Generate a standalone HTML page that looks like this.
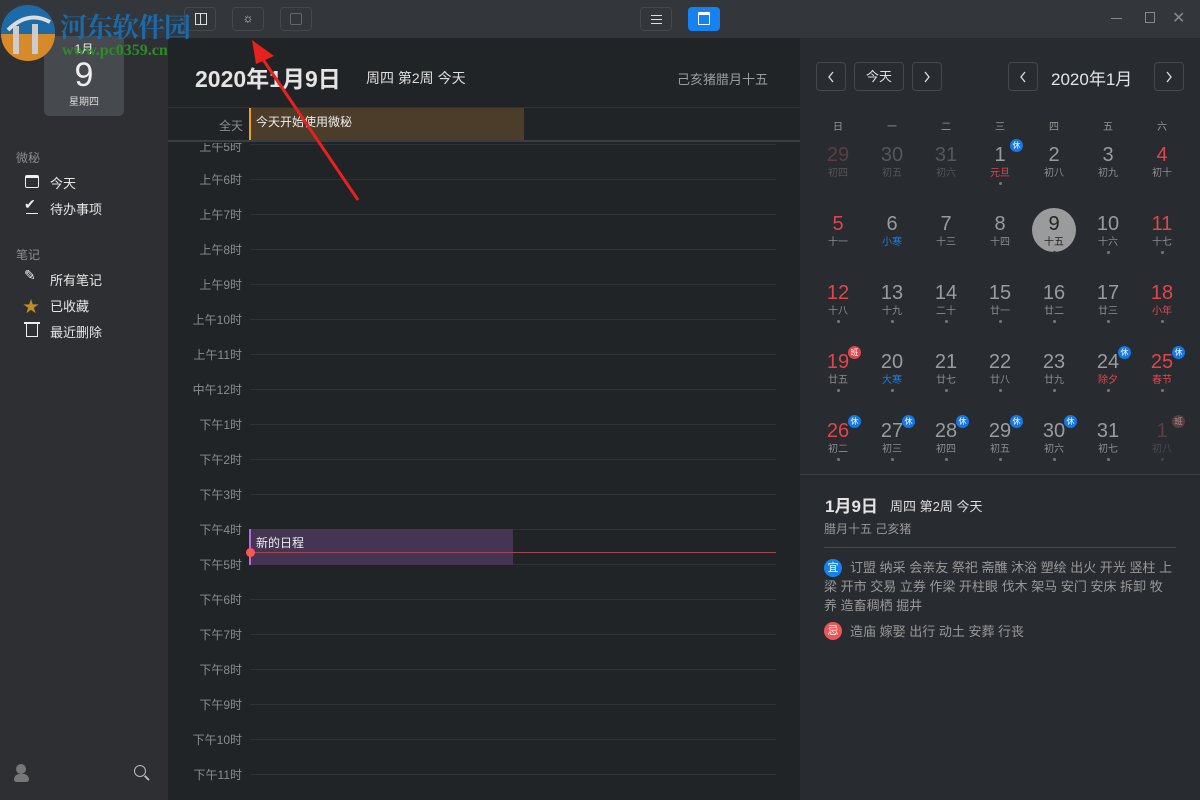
<!DOCTYPE html>
<html><head><meta charset="utf-8"><style>
*{margin:0;padding:0;box-sizing:border-box}
body{width:1200px;height:800px;overflow:hidden;background:#212427;font-family:"Liberation Sans","Noto Sans CJK SC",sans-serif;position:relative;color:#ddd}
.a{position:absolute}
.btn{position:absolute;border:1px solid #45484d;border-radius:4px}
.hl{position:absolute;left:250px;width:526px;height:1px;background:#2e3135}
.hlab{position:absolute;right:958px;font-size:12px;color:#8a8c8f;white-space:nowrap}
.c{position:absolute;width:54px;text-align:center}
.c .n{font-size:20px;line-height:22px;color:#9a9b9d}
.c .l{font-size:10px;line-height:12px;color:#8d8e90;margin-top:2px}
.c .d{width:3px;height:3px;border-radius:2px;background:#777;margin:2px auto 0}
.r .n,.r .l{color:#e0474c}
.b{position:absolute;width:13px;height:13px;border-radius:7px;background:#1677e6;color:#fff;font-size:8px;line-height:13px;text-align:center}
.side{font-size:13px;color:#e6e6e6}
.chev{position:absolute;left:9px;top:8px}
</style></head><body>
<div class="a" style="left:0;top:0;width:1200px;height:38px;background:#33363a"></div>
<div class="a" style="left:0;top:38px;width:168px;height:762px;background:#2d2f33"></div>
<div class="a" style="left:800px;top:38px;width:400px;height:762px;background:#282b2f"></div>

<div class="btn" style="left:184px;top:7px;width:32px;height:24px"><div class="a" style="left:10px;top:5px;width:12px;height:12px;border:1px solid #ddd"></div><div class="a" style="left:15px;top:5px;width:1px;height:12px;background:#ddd"></div></div>
<div class="btn" style="left:232px;top:7px;width:32px;height:24px"><div class="a" style="left:0;top:3px;width:30px;text-align:center;font-size:12px;color:#ddd">☼</div></div>
<div class="btn" style="left:280px;top:7px;width:32px;height:24px"><div class="a" style="left:9px;top:5px;width:12px;height:12px;border:1px solid #666;border-radius:2px"></div></div>
<div class="btn" style="left:640px;top:7px;width:32px;height:24px"><div class="a" style="left:10px;top:7px;width:11px;height:9px;border-top:1px solid #ddd;border-bottom:1px solid #ddd"></div><div class="a" style="left:10px;top:11px;width:11px;height:1px;background:#ddd"></div></div>
<div class="a" style="left:688px;top:7px;width:32px;height:24px;background:#1682f2;border-radius:4px"><div class="a" style="left:10px;top:5px;width:12px;height:13px;border:1px solid #fff;border-top-width:3px;border-radius:1px"></div></div>
<div class="a" style="left:1111px;top:18px;width:11px;height:1px;background:#888"></div>
<div class="a" style="left:1145px;top:12px;width:10px;height:11px;border:1px solid #888"></div>
<div class="a" style="left:1172px;top:8px;font-size:16px;color:#888">✕</div>

<div class="a" style="left:44px;top:36px;width:80px;height:80px;background:#46494d;border-radius:5px;text-align:center">
<div style="font-size:12px;color:#eee;margin-top:4px">1月</div>
<div style="font-size:34px;line-height:36px;color:#eee">9</div>
<div style="font-size:10px;color:#ddd">星期四</div></div>
<div class="a" style="left:16px;top:149px;font-size:12px;color:#8a8c8f">微秘</div>
<div class="a" style="left:25px;top:175px;width:14px;height:13px;border:1.5px solid #eee;border-top-width:3px;border-radius:2px"></div>
<div class="a side" style="left:50px;top:173px">今天</div>
<div class="a" style="left:24px;top:196px;font-size:14px;color:#eee">✔</div>
<div class="a" style="left:26px;top:213px;width:12px;height:1px;background:#eee"></div>
<div class="a side" style="left:50px;top:199px">待办事项</div>
<div class="a" style="left:16px;top:246px;font-size:12px;color:#8a8c8f">笔记</div>
<div class="a" style="left:24px;top:267px;font-size:14px;color:#eee">✎</div>
<div class="a side" style="left:50px;top:270px">所有笔记</div>
<div class="a" style="left:23px;top:293px;font-size:16px;color:#c38a28">★</div>
<div class="a side" style="left:50px;top:296px">已收藏</div>
<div class="a" style="left:26px;top:324px;width:12px;height:13px;border:1.5px solid #eee;border-top:none"></div>
<div class="a" style="left:24px;top:322px;width:16px;height:1.5px;background:#eee"></div>
<div class="a side" style="left:50px;top:322px">最近删除</div>
<div class="a" style="left:16px;top:764px;width:10px;height:10px;border-radius:5px;background:#777"></div>
<div class="a" style="left:14px;top:774px;width:15px;height:8px;border-radius:7px 7px 3px 3px;background:#777"></div>
<div class="a" style="left:134px;top:765px;width:12px;height:12px;border:1.5px solid #bbb;border-radius:6px"></div>
<div class="a" style="left:144px;top:777px;width:6px;height:1.5px;background:#bbb;transform:rotate(45deg)"></div>

<div class="a" style="left:195px;top:60px;font-size:23px;font-weight:bold;color:#e4e4e4">2020年1月9日</div>
<div class="a" style="left:366px;top:68px;font-size:14px;color:#ddd">周四 第2周 今天</div>
<div class="a" style="left:677px;top:69px;font-size:13px;color:#9a9b9d">己亥猪腊月十五</div>
<div class="a" style="left:168px;top:107px;width:632px;height:1px;background:#2e3135"></div>
<div class="a" style="left:219px;top:117px;font-size:12px;color:#8a8c8f">全天</div>
<div class="a" style="left:249px;top:108px;width:275px;height:32px;background:#4b3d29;border-left:2px solid #f0a020"></div>
<div class="a" style="left:256px;top:113px;font-size:12px;color:#eee">今天开始使用微秘</div>
<div class="a" style="left:168px;top:140px;width:632px;height:2px;background:#3a3d41"></div>

<div class="hl" style="top:144px"></div><div class="hlab" style="top:138px;clip-path:inset(5px 0 0 0)">上午5时</div>
<div class="hl" style="top:179px"></div><div class="hlab" style="top:171px">上午6时</div>
<div class="hl" style="top:214px"></div><div class="hlab" style="top:206px">上午7时</div>
<div class="hl" style="top:249px"></div><div class="hlab" style="top:241px">上午8时</div>
<div class="hl" style="top:284px"></div><div class="hlab" style="top:276px">上午9时</div>
<div class="hl" style="top:319px"></div><div class="hlab" style="top:311px">上午10时</div>
<div class="hl" style="top:354px"></div><div class="hlab" style="top:346px">上午11时</div>
<div class="hl" style="top:389px"></div><div class="hlab" style="top:381px">中午12时</div>
<div class="hl" style="top:424px"></div><div class="hlab" style="top:416px">下午1时</div>
<div class="hl" style="top:459px"></div><div class="hlab" style="top:451px">下午2时</div>
<div class="hl" style="top:494px"></div><div class="hlab" style="top:486px">下午3时</div>
<div class="hl" style="top:529px"></div><div class="hlab" style="top:521px">下午4时</div>
<div class="hl" style="top:564px"></div><div class="hlab" style="top:556px">下午5时</div>
<div class="hl" style="top:599px"></div><div class="hlab" style="top:591px">下午6时</div>
<div class="hl" style="top:634px"></div><div class="hlab" style="top:626px">下午7时</div>
<div class="hl" style="top:669px"></div><div class="hlab" style="top:661px">下午8时</div>
<div class="hl" style="top:704px"></div><div class="hlab" style="top:696px">下午9时</div>
<div class="hl" style="top:739px"></div><div class="hlab" style="top:731px">下午10时</div>
<div class="hl" style="top:774px"></div><div class="hlab" style="top:766px">下午11时</div>
<div class="a" style="left:249px;top:529px;width:264px;height:36px;background:#443553;border-left:2px solid #b36be0"></div>
<div class="a" style="left:256px;top:534px;font-size:12px;color:#eee">新的日程</div>
<div class="a" style="left:251px;top:552px;width:525px;height:1px;background:#a04852"></div>
<div class="a" style="left:246px;top:548px;width:9px;height:9px;border-radius:5px;background:#ff5555"></div>

<div class="btn" style="left:816px;top:62px;width:30px;height:29px"><svg class="chev" width="10" height="12"><polyline points="7,1 3,6 7,11" stroke="#ddd" fill="none" stroke-width="1.3"/></svg></div>
<div class="btn" style="left:854px;top:62px;width:50px;height:29px;color:#ddd;font-size:13px;text-align:center;line-height:27px">今天</div>
<div class="btn" style="left:912px;top:62px;width:30px;height:29px"><svg class="chev" width="10" height="12"><polyline points="3,1 7,6 3,11" stroke="#ddd" fill="none" stroke-width="1.3"/></svg></div>
<div class="btn" style="left:1008px;top:62px;width:30px;height:29px"><svg class="chev" width="10" height="12"><polyline points="7,1 3,6 7,11" stroke="#ddd" fill="none" stroke-width="1.3"/></svg></div>
<div class="a" style="left:1051px;top:65px;font-size:17px;color:#e4e4e4">2020年1月</div>
<div class="btn" style="left:1154px;top:62px;width:30px;height:29px"><svg class="chev" width="10" height="12"><polyline points="3,1 7,6 3,11" stroke="#ddd" fill="none" stroke-width="1.3"/></svg></div>

<div class="a" style="left:811px;top:118px;width:378px;font-size:10px;color:#999;display:flex"><span style="width:54px;text-align:center">日</span><span style="width:54px;text-align:center">一</span><span style="width:54px;text-align:center">二</span><span style="width:54px;text-align:center">三</span><span style="width:54px;text-align:center">四</span><span style="width:54px;text-align:center">五</span><span style="width:54px;text-align:center">六</span></div>

<div class="c" style="left:811px;top:144px"><div class="n" style="color:#5c3e42">29</div><div class="l" style="color:#555">初四</div></div>
<div class="c" style="left:865px;top:144px"><div class="n" style="color:#55575a">30</div><div class="l" style="color:#555">初五</div></div>
<div class="c" style="left:919px;top:144px"><div class="n" style="color:#55575a">31</div><div class="l" style="color:#555">初六</div></div>
<div class="c" style="left:973px;top:144px"><div class="n">1</div><div class="l" style="color:#e0474c">元旦</div><div class="d"></div></div>
<div class="b" style="left:1010px;top:139px">休</div>
<div class="c" style="left:1027px;top:144px"><div class="n">2</div><div class="l">初八</div></div>
<div class="c" style="left:1081px;top:144px"><div class="n">3</div><div class="l">初九</div></div>
<div class="c r" style="left:1135px;top:144px"><div class="n">4</div><div class="l" style="color:#8d8e90">初十</div></div>
<div class="c r" style="left:811px;top:213px"><div class="n">5</div><div class="l" style="color:#8d8e90">十一</div></div>
<div class="c" style="left:865px;top:213px"><div class="n">6</div><div class="l" style="color:#1e7de0">小寒</div></div>
<div class="c" style="left:919px;top:213px"><div class="n">7</div><div class="l">十三</div></div>
<div class="c" style="left:973px;top:213px"><div class="n">8</div><div class="l">十四</div></div>
<div class="a" style="left:1032px;top:208px;width:44px;height:44px;border-radius:22px;background:#9a9b9d"></div>
<div class="c" style="left:1027px;top:213px"><div class="n" style="color:#222">9</div><div class="l" style="color:#222">十五</div><div class="d" style="background:#333"></div></div>
<div class="c" style="left:1081px;top:213px"><div class="n">10</div><div class="l">十六</div><div class="d"></div></div>
<div class="c r" style="left:1135px;top:213px"><div class="n">11</div><div class="l" style="color:#8d8e90">十七</div><div class="d"></div></div>
<div class="c r" style="left:811px;top:282px"><div class="n">12</div><div class="l" style="color:#8d8e90">十八</div><div class="d"></div></div>
<div class="c" style="left:865px;top:282px"><div class="n">13</div><div class="l">十九</div><div class="d"></div></div>
<div class="c" style="left:919px;top:282px"><div class="n">14</div><div class="l">二十</div><div class="d"></div></div>
<div class="c" style="left:973px;top:282px"><div class="n">15</div><div class="l">廿一</div><div class="d"></div></div>
<div class="c" style="left:1027px;top:282px"><div class="n">16</div><div class="l">廿二</div><div class="d"></div></div>
<div class="c" style="left:1081px;top:282px"><div class="n">17</div><div class="l">廿三</div><div class="d"></div></div>
<div class="c r" style="left:1135px;top:282px"><div class="n">18</div><div class="l">小年</div><div class="d"></div></div>
<div class="c r" style="left:811px;top:351px"><div class="n">19</div><div class="l" style="color:#8d8e90">廿五</div><div class="d"></div></div>
<div class="b" style="left:848px;top:346px;background:#e0474c">班</div>
<div class="c" style="left:865px;top:351px"><div class="n">20</div><div class="l" style="color:#1e7de0">大寒</div><div class="d"></div></div>
<div class="c" style="left:919px;top:351px"><div class="n">21</div><div class="l">廿七</div><div class="d"></div></div>
<div class="c" style="left:973px;top:351px"><div class="n">22</div><div class="l">廿八</div><div class="d"></div></div>
<div class="c" style="left:1027px;top:351px"><div class="n">23</div><div class="l">廿九</div><div class="d"></div></div>
<div class="c" style="left:1081px;top:351px"><div class="n">24</div><div class="l" style="color:#e0474c">除夕</div><div class="d"></div></div>
<div class="b" style="left:1118px;top:346px">休</div>
<div class="c r" style="left:1135px;top:351px"><div class="n">25</div><div class="l">春节</div><div class="d"></div></div>
<div class="b" style="left:1172px;top:346px">休</div>
<div class="c r" style="left:811px;top:420px"><div class="n">26</div><div class="l" style="color:#8d8e90">初二</div><div class="d"></div></div>
<div class="b" style="left:848px;top:415px">休</div>
<div class="c" style="left:865px;top:420px"><div class="n">27</div><div class="l">初三</div><div class="d"></div></div>
<div class="b" style="left:902px;top:415px">休</div>
<div class="c" style="left:919px;top:420px"><div class="n">28</div><div class="l">初四</div><div class="d"></div></div>
<div class="b" style="left:956px;top:415px">休</div>
<div class="c" style="left:973px;top:420px"><div class="n">29</div><div class="l">初五</div><div class="d"></div></div>
<div class="b" style="left:1010px;top:415px">休</div>
<div class="c" style="left:1027px;top:420px"><div class="n">30</div><div class="l">初六</div><div class="d"></div></div>
<div class="b" style="left:1064px;top:415px">休</div>
<div class="c" style="left:1081px;top:420px"><div class="n">31</div><div class="l">初七</div><div class="d"></div></div>
<div class="c" style="left:1135px;top:420px"><div class="n" style="color:#5c3e42">1</div><div class="l" style="color:#4a4b4d">初八</div><div class="d" style="background:#444"></div></div>
<div class="b" style="left:1172px;top:415px;background:#5c3e42;color:#999">班</div>
<div class="a" style="left:800px;top:474px;width:400px;height:1px;background:#3a3d41"></div>

<div class="a" style="left:825px;top:492px;font-size:17px;font-weight:bold;color:#e4e4e4">1月9日</div>
<div class="a" style="left:890px;top:496px;font-size:13px;color:#ddd">周四 第2周 今天</div>
<div class="a" style="left:824px;top:520px;font-size:12px;color:#999">腊月十五 己亥猪</div>
<div class="a" style="left:824px;top:547px;width:352px;height:1px;background:#45484c"></div>
<div class="a" style="left:824px;top:559px;width:18px;height:18px;border-radius:9px;background:#1682f2;color:#fff;font-size:11px;line-height:18px;text-align:center">宜</div>
<div class="a" style="left:824px;top:558px;font-size:13px;line-height:19px;color:#999;white-space:nowrap"><span style="padding-left:26px">订盟 纳采 会亲友 祭祀 斋醮 沐浴 塑绘 出火 开光 竖柱 上</span><br>梁 开市 交易 立券 作梁 开柱眼 伐木 架马 安门 安床 拆卸 牧<br>养 造畜稠栖 掘井</div>
<div class="a" style="left:824px;top:622px;width:18px;height:18px;border-radius:9px;background:#f05555;color:#fff;font-size:11px;line-height:18px;text-align:center">忌</div>
<div class="a" style="left:850px;top:621px;font-size:13px;color:#999">造庙 嫁娶 出行 动土 安葬 行丧</div>

<svg class="a" style="left:0;top:0" width="60" height="65" viewBox="0 0 60 65">
<circle cx="28" cy="32" r="27" fill="#1d6aa8"/>
<path d="M1 34 A27 27 0 0 0 55 34 Z" fill="#d68a2a"/>
<rect x="13" y="26" width="6" height="28" fill="#ccc"/><rect x="32" y="24" width="6" height="30" fill="#ccc"/>
<path d="M8 30 Q28 10 50 22" stroke="#ddd" stroke-width="4" fill="none"/>
</svg>
<div class="a" style="left:60px;top:6px;font-size:27px;font-weight:bold;color:#1d6aa8;font-family:'Noto Serif CJK SC','Liberation Serif',serif;letter-spacing:-1px">河东软件园</div>
<div class="a" style="left:62px;top:42px;font-size:16px;font-weight:bold;color:#2f8a2a;font-family:'Liberation Serif',serif">www.pc0359.cn</div>
<svg class="a" style="left:0;top:0" width="400" height="220">
<line x1="358" y1="200" x2="262" y2="58" stroke="#e8201e" stroke-width="3"/>
<polygon points="252,40 274,56 256,64" fill="#e8201e"/>
</svg>
</body></html>
